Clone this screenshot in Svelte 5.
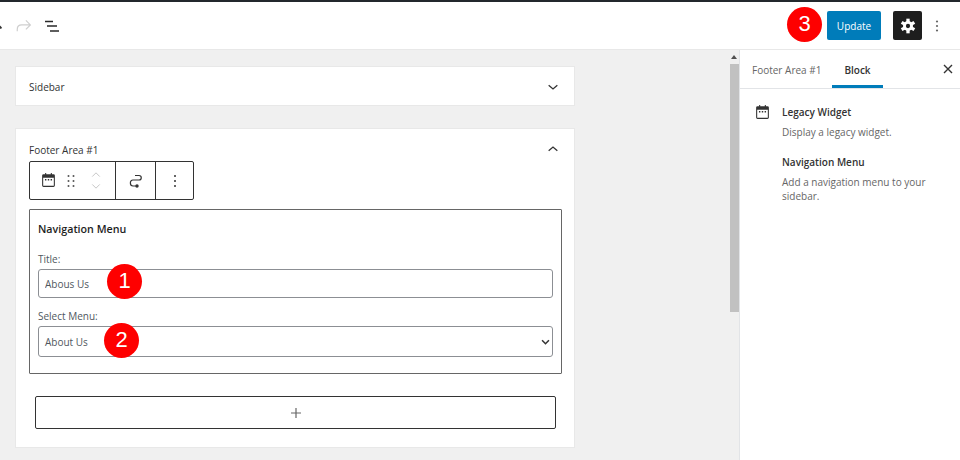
<script>
	const calendarPath = 'M19 3H5a2 2 0 0 0-2 2v14a2 2 0 0 0 2 2h14a2 2 0 0 0 2-2V5a2 2 0 0 0-2-2zm.5 16a.5.5 0 0 1-.5.5H5a.5.5 0 0 1-.5-.5V8h15v11zM7 10h2v2H7zm4 0h2v2h-2zm4 0h2v2h-2z';
</script>

<div class="editor">
	<header class="topbar">
		<div class="tools">
			<svg width="24" height="24" viewBox="0 0 24 24"><path d="M10 14h11.500M17 9.500l4.500 4.500" fill="none" stroke="#333" stroke-width="1.500" /></svg>
			<svg class="redo" width="18" height="18" viewBox="0 0 24 24"><path d="M3 19v-2.500c0-4 2-6 6-6h11M14.500 4.500l6 6-6 6" fill="none" stroke="#cfcfcf" stroke-width="1.600" /></svg>
			<svg class="outline" width="18" height="18" viewBox="0 0 18 18"><path d="M1 4.500h8M3 9h10M6 14h9" fill="none" stroke="#2a2a2a" stroke-width="1.300" /></svg>
		</div>
		<div class="actions">
			<button class="update">Update</button>
			<button class="settings" aria-label="Settings">
				<svg width="16" height="16" viewBox="0 0 24 24">
					<g transform="translate(12 12)" fill="#fff">
						<rect x="-2.500" y="-11" width="5" height="22" />
						<rect x="-2.500" y="-11" width="5" height="22" transform="rotate(60)" />
						<rect x="-2.500" y="-11" width="5" height="22" transform="rotate(120)" />
						<circle r="7.500" />
						<circle r="3.200" fill="#1e1e1e" />
					</g>
				</svg>
			</button>
			<svg class="more" width="4" height="14" viewBox="0 0 4 14"><circle cx="2" cy="2.500" r="1.100" /><circle cx="2" cy="7" r="1.100" /><circle cx="2" cy="11.500" r="1.100" /></svg>
		</div>
		<span class="badge badge-three">3</span>
	</header>

	<div class="body">
		<main class="content">
			<section class="card sidebar-card">
				<span>Sidebar</span>
				<svg width="16" height="16" viewBox="0 0 24 24"><path d="M5.500 9.500l6.500 5.500 6.500-5.500" fill="none" stroke="#333" stroke-width="2" /></svg>
			</section>

			<section class="card footer-card">
				<div class="footer-head">
					<span>Footer Area #1</span>
					<svg width="16" height="16" viewBox="0 0 24 24"><path d="M5.500 14.500l6.500-5.500 6.500 5.500" fill="none" stroke="#333" stroke-width="2" /></svg>
				</div>

				<div class="toolbar">
					<div class="group first">
						<svg width="17" height="17" viewBox="0 0 24 24"><path fill="#333" d={calendarPath} /><path d="M8 1.500v3M16 1.500v3" stroke="#333" stroke-width="1.500" /></svg>
						<svg class="drag" width="8" height="14" viewBox="0 0 8 14"><g fill="#555"><circle cx="1.500" cy="2" r="1" /><circle cx="6.500" cy="2" r="1" /><circle cx="1.500" cy="7" r="1" /><circle cx="6.500" cy="7" r="1" /><circle cx="1.500" cy="12" r="1" /><circle cx="6.500" cy="12" r="1" /></g></svg>
						<div class="movers">
							<svg width="10" height="7" viewBox="0 0 12 8"><path d="M1.500 6.500L6 2l4.500 4.500" fill="none" stroke="#c8c8c8" stroke-width="1.200" /></svg>
							<svg width="10" height="7" viewBox="0 0 12 8"><path d="M1.500 1.500L6 6l4.500-4.500" fill="none" stroke="#c8c8c8" stroke-width="1.200" /></svg>
						</div>
					</div>
					<div class="group transform">
						<svg width="18" height="18" viewBox="0 0 18 18"><path d="M8 3.500h4c3 0 3 4.500 0 4.500H6c-3.500 0-3.500 6 0 6h3" fill="none" stroke="#333" stroke-width="1.200" /><circle cx="10" cy="14" r="1.700" fill="#333" /></svg>
					</div>
					<div class="group dots">
						<svg width="4" height="14" viewBox="0 0 4 14"><circle cx="2" cy="2" r="1" /><circle cx="2" cy="7" r="1" /><circle cx="2" cy="12" r="1" /></svg>
					</div>
				</div>

				<div class="widget">
					<h3>Navigation Menu</h3>
					<label class="field title-field">
						<span>Title:</span>
						<input type="text" value="Abous Us" />
					</label>
					<label class="field menu-field">
						<span>Select Menu:</span>
						<div class="select">
							<span>About Us</span>
							<svg width="9" height="6" viewBox="0 0 10 7"><path d="M1 1.500l4 4 4-4" fill="none" stroke="#333" stroke-width="1.800" /></svg>
						</div>
					</label>
					<span class="badge badge-one">1</span>
					<span class="badge badge-two">2</span>
				</div>

				<button class="appender" aria-label="Add block">
					<svg width="14" height="14" viewBox="0 0 14 14"><path d="M7 2v10M2 7h10" stroke="#666" stroke-width="1.200" /></svg>
				</button>
			</section>
		</main>

		<div class="scrollbar">
			<svg width="6" height="4" viewBox="0 0 6 4"><path d="M3 0l3 4H0z" fill="#505050" /></svg>
			<div class="thumb"></div>
		</div>

		<aside class="panel">
			<div class="tabs">
				<span class="tab">Footer Area #1</span>
				<span class="tab active">Block</span>
				<svg class="close" width="12" height="12" viewBox="0 0 12 12"><path d="M2 2l8 8M10 2l-8 8" stroke="#333" stroke-width="1.400" /></svg>
			</div>
			<div class="info">
				<svg width="17" height="17" viewBox="0 0 24 24"><path fill="#333" d={calendarPath} /><path d="M8 1.500v3M16 1.500v3" stroke="#333" stroke-width="1.500" /></svg>
				<div class="info-text">
					<h4>Legacy Widget</h4>
					<p>Display a legacy widget.</p>
					<h4 class="second">Navigation Menu</h4>
					<p>Add a navigation menu to your sidebar.</p>
				</div>
			</div>
		</aside>
	</div>
</div>

<style>
	:global(body) {
		margin: 0;
		background: #fff;
	}

	.editor {
		width: 960px;
		height: 460px;
		overflow: hidden;
		display: flex;
		flex-direction: column;
		font-family: 'Open Sans', 'Noto Sans', sans-serif;
		font-size: 10px;
		color: #333;
		border-top: 2px solid #23282d;
		box-sizing: border-box;
	}

	.topbar {
		position: relative;
		height: 47px;
		flex: none;
		display: flex;
		justify-content: space-between;
		align-items: center;
		border-bottom: 1px solid #e8e8e8;
	}

	.tools {
		display: flex;
		align-items: center;
		margin-left: -20px;
		gap: 2px;
	}

	.redo {
		margin-left: 9px;
	}

	.outline {
		margin-left: 9px;
	}

	.actions {
		display: flex;
		align-items: center;
		margin-right: 21px;
	}

	.update {
		width: 54px;
		height: 29px;
		background: #007cba;
		border: none;
		border-radius: 2px;
		color: #fff;
		font: inherit;
		padding: 0;
	}

	.settings {
		width: 29px;
		height: 29px;
		margin-left: 12px;
		background: #1e1e1e;
		border: none;
		border-radius: 2px;
		padding: 0;
		display: flex;
		align-items: center;
		justify-content: center;
	}

	.more {
		margin-left: 13px;
		fill: #666;
	}

	.badge {
		position: absolute;
		width: 35px;
		height: 35px;
		border-radius: 50%;
		background: #fe0000;
		color: #fff;
		font-family: 'Liberation Sans', Arial, sans-serif;
		font-size: 22px;
		line-height: 34px;
		text-align: center;
	}

	.badge-three {
		left: 787px;
		top: 5px;
	}

	.badge-one {
		left: 77px;
		top: 54px;
	}

	.badge-two {
		left: 74px;
		top: 113px;
	}

	.body {
		flex: 1;
		min-height: 0;
		display: flex;
	}

	.content {
		width: 729px;
		flex: none;
		box-sizing: border-box;
		background: #f0f0f0;
		padding: 16px 0 0 15px;
	}

	.card {
		width: 560px;
		box-sizing: border-box;
		background: #fff;
		border: 1px solid #e8e8e8;
	}

	.sidebar-card {
		height: 40px;
		display: flex;
		align-items: center;
		justify-content: space-between;
		padding: 1px 13px 0;
		margin-bottom: 23px;
	}

	.footer-card {
		height: 320px;
		margin-top: -1px;
		padding: 11px 13px 0;
	}

	.footer-head {
		display: flex;
		justify-content: space-between;
		align-items: center;
		height: 18px;
		margin-bottom: 3px;
	}

	.footer-head span {
		padding-top: 1px;
	}

	.toolbar {
		display: inline-flex;
		height: 39px;
		box-sizing: border-box;
		border: 1px solid #333;
		border-radius: 2px;
		vertical-align: top;
	}

	.group {
		display: flex;
		align-items: center;
		justify-content: center;
	}

	.group + .group {
		border-left: 1px solid #333;
	}

	.first {
		width: 85px;
		justify-content: flex-start;
		padding-left: 10px;
		box-sizing: border-box;
	}

	.drag {
		margin-left: 10px;
	}

	.movers {
		display: flex;
		flex-direction: column;
		gap: 5px;
		margin-left: 16px;
	}

	.transform {
		width: 39px;
	}

	.dots {
		width: 37px;
	}

	.dots svg {
		fill: #333;
	}

	.widget {
		position: relative;
		width: 533px;
		height: 165px;
		box-sizing: border-box;
		margin-top: 9px;
		border: 1px solid #666;
		border-radius: 1px;
		padding: 12px 8px 0;
	}

	.widget h3 {
		margin: 0;
		font-size: 10.700px;
		font-weight: 600;
		line-height: 15px;
		color: #1e1e1e;
	}

	.field {
		display: block;
		color: #50575e;
	}

	.field > span {
		display: block;
		line-height: 14px;
	}

	.title-field {
		margin-top: 15px;
	}

	.menu-field {
		margin-top: 11px;
	}

	input,
	.select {
		display: flex;
		align-items: center;
		width: 515px;
		box-sizing: border-box;
		border: 1px solid #8c8f94;
		border-radius: 3px;
		padding: 0 6px;
		font: inherit;
		color: #50575e;
		background: #fff;
		outline: none;
		margin-top: 3px;
	}

	input {
		height: 29px;
	}

	.select {
		height: 31px;
		justify-content: space-between;
		padding-right: 2px;
	}

	.select span {
		color: #50575e;
	}

	.appender {
		display: flex;
		align-items: center;
		justify-content: center;
		width: 521px;
		height: 33px;
		margin: 22px 0 0 6px;
		background: #fff;
		border: 1px solid #333;
		border-radius: 2px;
		padding: 0;
	}

	.scrollbar {
		width: 10px;
		flex: none;
		background: #f0f0f0;
		display: flex;
		flex-direction: column;
		align-items: center;
		padding-top: 5px;
		box-sizing: border-box;
	}

	.thumb {
		width: 9px;
		height: 248px;
		margin-top: 5px;
		background: #c1c1c1;
	}

	.panel {
		flex: 1;
		border-left: 1px solid #e2e4e7;
		background: #fff;
	}

	.tabs {
		height: 38px;
		display: flex;
		align-items: flex-start;
		position: relative;
		border-bottom: 1px solid #e2e4e7;
		padding-left: 12px;
		color: #666;
	}

	.tab {
		line-height: 40px;
		height: 38px;
		box-sizing: border-box;
	}

	.tab.active {
		margin-left: 11px;
		padding: 0 12px;
		color: #333;
		font-weight: 600;
		border-bottom: 3px solid #007cba;
	}

	.close {
		position: absolute;
		right: 8px;
		top: 13px;
	}

	.info {
		display: flex;
		padding: 15px 15px 0;
		margin-left: -1px;
	}

	.info-text {
		margin-left: 11px;
		padding-top: 1px;
	}

	.info h4 {
		margin: 0 0 6px;
		font-size: 10px;
		font-weight: 600;
		line-height: 14px;
	}

	.info h4.second {
		margin-top: 16px;
	}

	.info p {
		margin: 0;
		width: 165px;
		color: #666;
		line-height: 14px;
	}
</style>
